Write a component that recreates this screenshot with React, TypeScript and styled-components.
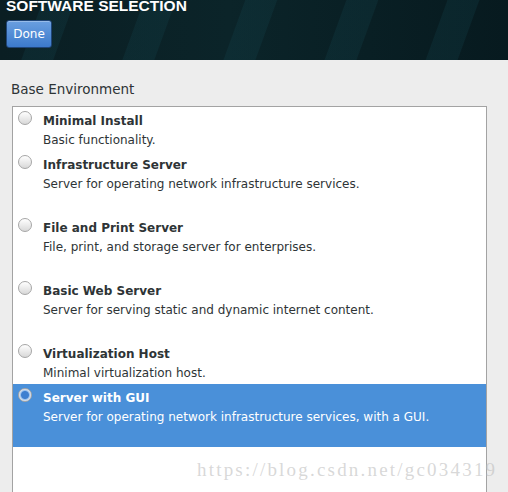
import styled, { createGlobalStyle } from "styled-components";

const GlobalStyle = createGlobalStyle`
  html, body {
    margin: 0;
    padding: 0;
    background: #ededed;
    overflow: hidden;
  }
  body {
    font-family: "DejaVu Sans", "Noto Sans", sans-serif;
  }
`;

const Page = styled.div`
  position: relative;
  width: 508px;
  height: 492px;
  overflow: hidden;
  background: #ededed;
`;

const Header = styled.header`
  display: flex;
  flex-direction: column;
  align-items: flex-start;
  height: 60px;
  box-sizing: border-box;
  padding: 0 6px;
  overflow: hidden;
  background:
    repeating-linear-gradient(
      110deg,
      rgba(20, 70, 80, 0) 0px,
      rgba(20, 70, 80, 0) 40px,
      rgba(20, 70, 80, 0.25) 41px,
      rgba(20, 70, 80, 0.25) 70px,
      rgba(20, 70, 80, 0) 71px,
      rgba(20, 70, 80, 0) 95px
    ),
    linear-gradient(90deg, #0a1e23 0%, #0b2429 45%, #071a1f 100%);
`;

const Title = styled.h1`
  margin: -3px 0 0 0;
  color: #ffffff;
  font-family: "Liberation Sans", "DejaVu Sans", sans-serif;
  font-weight: bold;
  font-size: 15.5px;
  line-height: 18px;
  white-space: nowrap;
`;

const DoneButton = styled.button`
  margin-top: 5px;
  width: 46px;
  height: 28px;
  padding: 0;
  border: 1px solid #1f4577;
  border-radius: 3px;
  background: linear-gradient(#6a9fe0, #3c7acb);
  color: #ffffff;
  font-family: "DejaVu Sans", sans-serif;
  font-size: 12px;
  box-shadow: inset 0 1px 0 rgba(255, 255, 255, 0.3);
`;

const Content = styled.section`
  padding: 20px 21px 0 11px;
`;

const SectionLabel = styled.div`
  color: #2e3436;
  font-size: 13.5px;
  line-height: 18px;
  margin-bottom: 8px;
`;

const ListBox = styled.div`
  margin-left: 1px;
  height: 400px;
  background: #ffffff;
  border: 1px solid #a3a3a3;
  border-bottom: none;
`;

const Item = styled.div<{ $selected?: boolean; $tall?: boolean }>`
  display: flex;
  align-items: flex-start;
  height: ${(p) => (p.$tall ? 63 : 44)}px;
  box-sizing: border-box;
  padding: 5px 0 0 5px;
  background: ${(p) => (p.$selected ? "#4a90d9" : "transparent")};
  color: ${(p) => (p.$selected ? "#ffffff" : "#2e3436")};
`;

const Radio = styled.span<{ $checked?: boolean }>`
  flex: none;
  width: 12px;
  height: 12px;
  margin-top: -1px;
  margin-right: 11px;
  border-radius: 50%;
  border: 1px solid #a6a6a6;
  background: ${(p) =>
    p.$checked
      ? "radial-gradient(circle, #3f7fd0 0 3.5px, #9cc0ec 4.5px, #e8eef6 6px)"
      : "linear-gradient(#ffffff, #d8d8d8)"};
`;

const ItemText = styled.div`
  display: flex;
  flex-direction: column;
`;

const ItemTitle = styled.span`
  font-weight: bold;
  font-size: 12px;
  line-height: 19px;
`;

const ItemDesc = styled.span`
  font-size: 12px;
  line-height: 19px;
`;

const Watermark = styled.div`
  position: absolute;
  left: 197px;
  top: 459px;
  font-family: "Liberation Serif", "DejaVu Serif", serif;
  font-size: 19px;
  letter-spacing: 2.2px;
  color: rgba(190, 190, 190, 0.6);
  white-space: nowrap;
`;

const environments = [
  { title: "Minimal Install", desc: "Basic functionality.", tall: false },
  {
    title: "Infrastructure Server",
    desc: "Server for operating network infrastructure services.",
    tall: true,
  },
  {
    title: "File and Print Server",
    desc: "File, print, and storage server for enterprises.",
    tall: true,
  },
  {
    title: "Basic Web Server",
    desc: "Server for serving static and dynamic internet content.",
    tall: true,
  },
  { title: "Virtualization Host", desc: "Minimal virtualization host.", tall: false },
  {
    title: "Server with GUI",
    desc: "Server for operating network infrastructure services, with a GUI.",
    tall: true,
    selected: true,
  },
];

const App: React.FC = () => {
  return (
    <Page>
      <GlobalStyle />
      <Header>
        <Title>SOFTWARE SELECTION</Title>
        <DoneButton>Done</DoneButton>
      </Header>
      <Content>
        <SectionLabel>Base Environment</SectionLabel>
        <ListBox>
          {environments.map((env) => (
            <Item key={env.title} $selected={env.selected} $tall={env.tall}>
              <Radio $checked={env.selected} />
              <ItemText>
                <ItemTitle>{env.title}</ItemTitle>
                <ItemDesc>{env.desc}</ItemDesc>
              </ItemText>
            </Item>
          ))}
        </ListBox>
      </Content>
      <Watermark>https://blog.csdn.net/gc034319</Watermark>
    </Page>
  );
};

export default App;
